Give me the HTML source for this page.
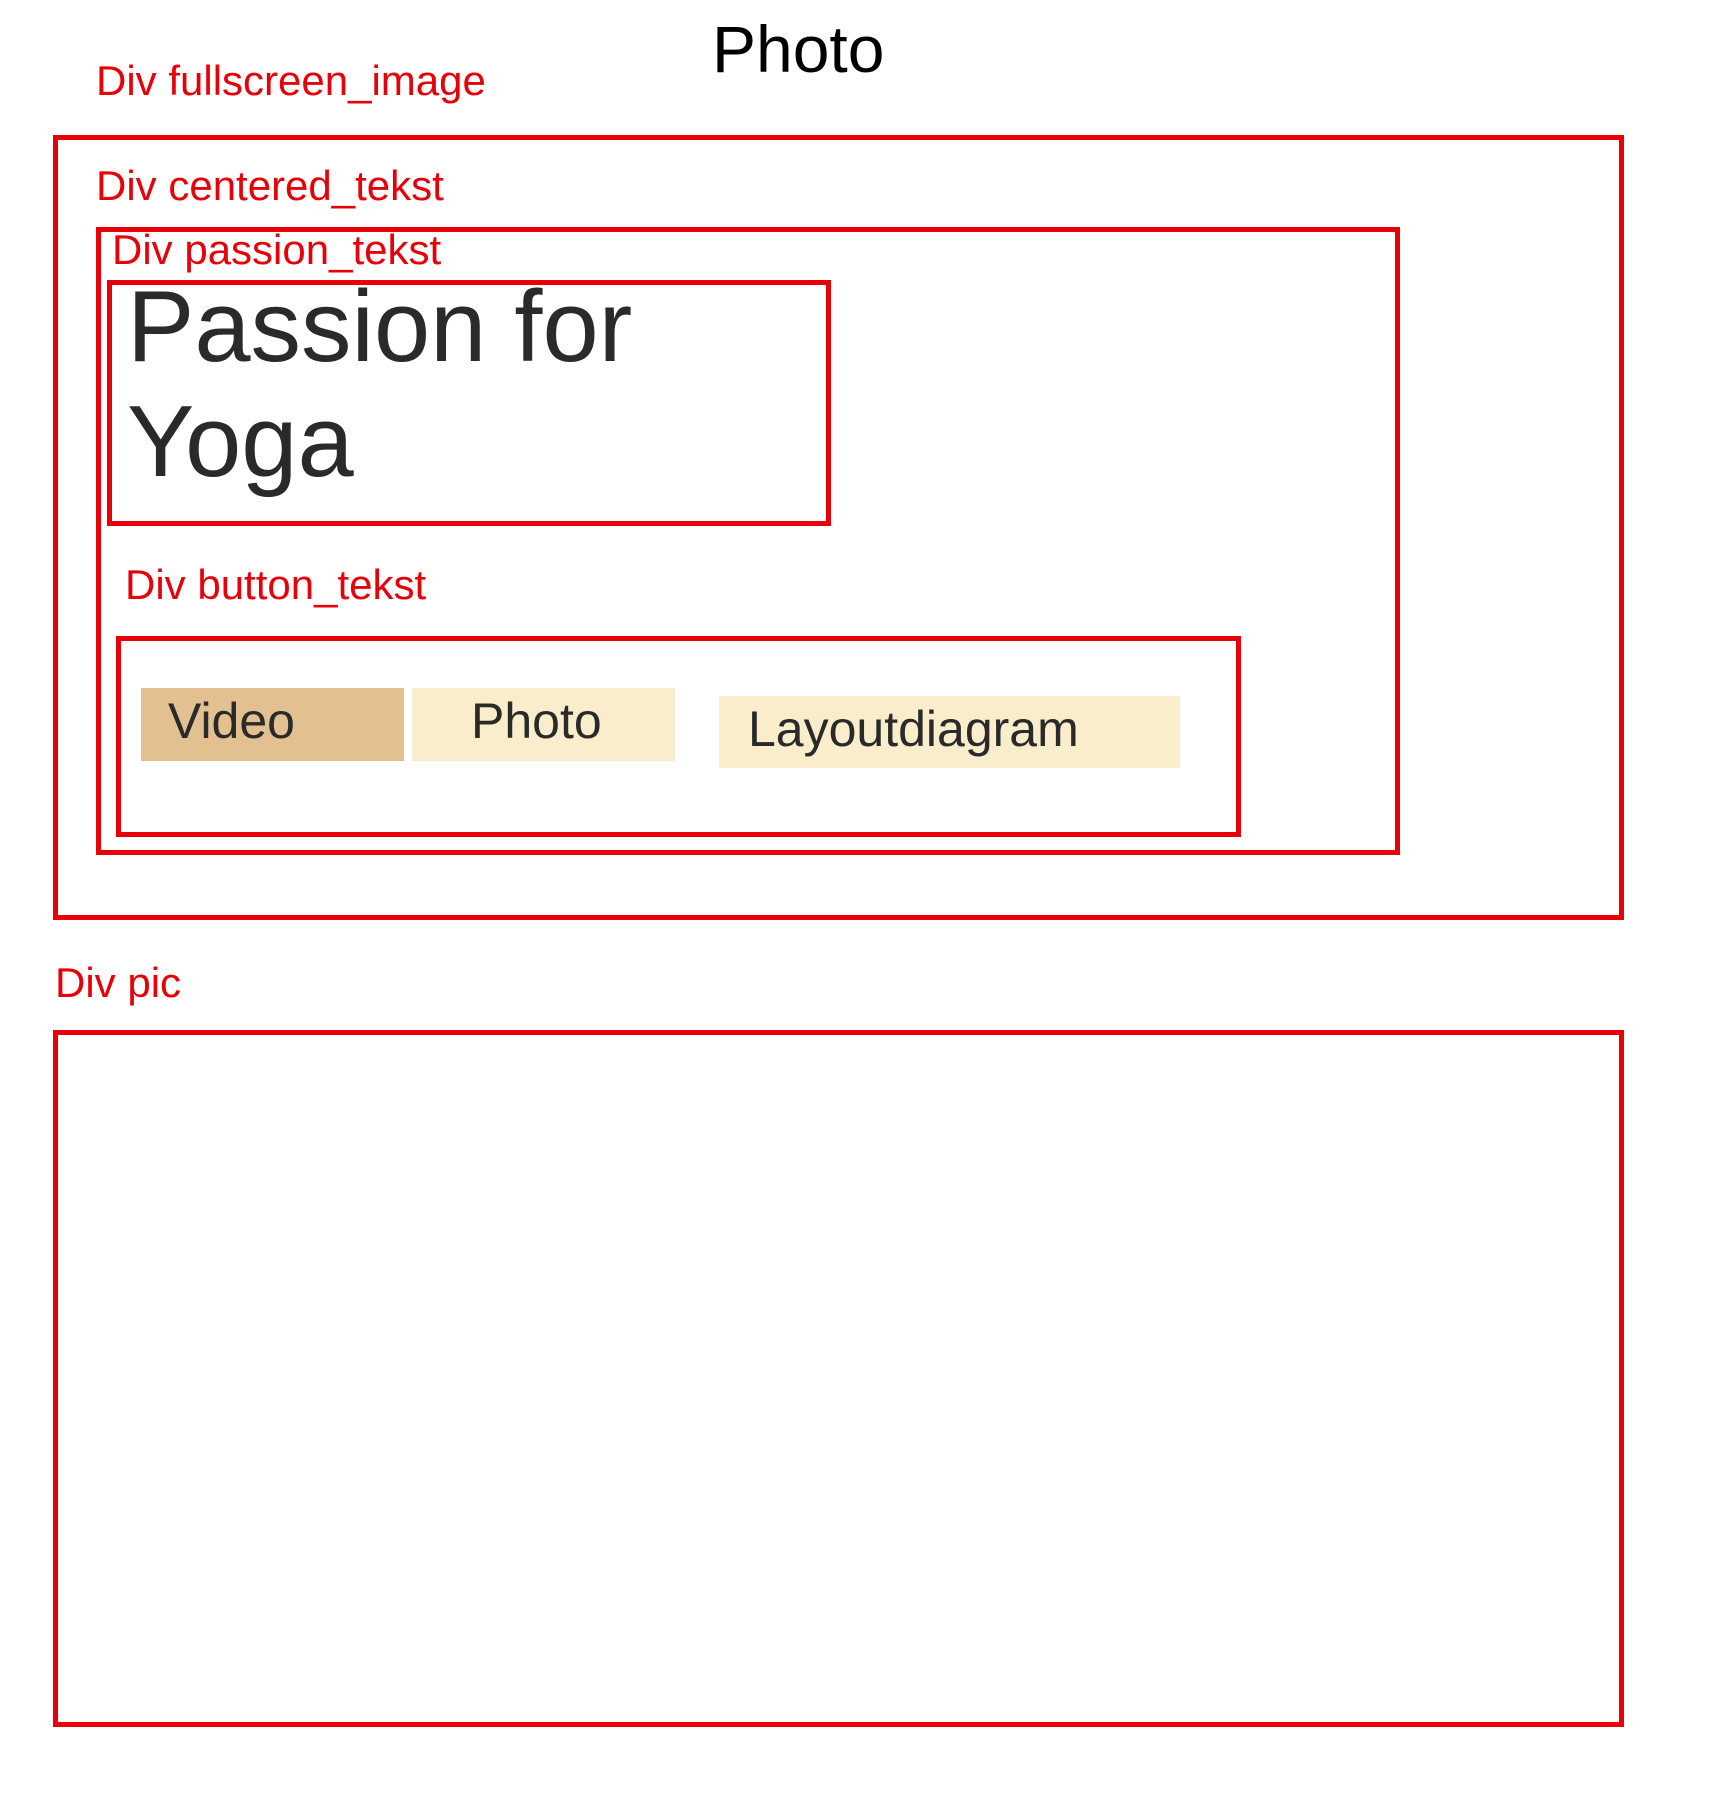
<!DOCTYPE html>
<html><head><meta charset="utf-8"><style>
html,body{margin:0;padding:0;background:#fff;}
body{width:1728px;height:1796px;position:relative;overflow:hidden;font-family:"Liberation Sans",sans-serif;}
.b{position:absolute;box-sizing:border-box;border:5px solid #e80008;}
.t{position:absolute;white-space:nowrap;line-height:1;}
.r{color:#e80008;font-size:42px;}
.btn{position:absolute;}
.d{color:#2a2a2a;}
</style></head><body>
<div class="t" style="left:712px;top:16px;font-size:66px;color:#000;">Photo</div>
<div class="t r" style="left:96px;top:60px;">Div fullscreen_image</div>
<div class="b" style="left:53px;top:135px;width:1571px;height:785px;"></div>
<div class="t r" style="left:96px;top:165px;">Div centered_tekst</div>
<div class="b" style="left:96px;top:227px;width:1304px;height:628px;"></div>
<div class="t r" style="left:112px;top:229px;">Div passion_tekst</div>
<div class="b" style="left:107px;top:280px;width:724px;height:246px;"></div>
<div class="t d" style="left:127px;top:270px;font-size:101px;line-height:115px;">Passion for<br>Yoga</div>
<div class="t r" style="left:125px;top:564px;">Div button_tekst</div>
<div class="b" style="left:116px;top:636px;width:1125px;height:201px;"></div>
<div class="btn" style="left:141px;top:688px;width:263px;height:73px;background:#e3c08f;"></div>
<div class="btn" style="left:412px;top:688px;width:263px;height:73px;background:#f9edcc;"></div>
<div class="btn" style="left:719px;top:696px;width:461px;height:72px;background:#f9edcc;"></div>
<div class="t d" style="left:168px;top:696px;font-size:50px;">Video</div>
<div class="t d" style="left:471px;top:696px;font-size:50px;">Photo</div>
<div class="t d" style="left:748px;top:704px;font-size:50px;">Layoutdiagram</div>
<div class="t r" style="left:55px;top:962px;">Div pic</div>
<div class="b" style="left:53px;top:1030px;width:1571px;height:697px;"></div>
</body></html>
